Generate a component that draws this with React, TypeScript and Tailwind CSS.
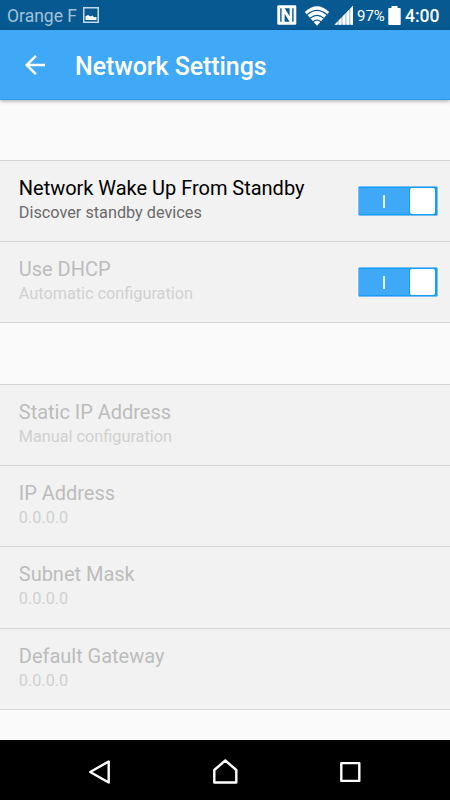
import React from "react";

function Toggle() {
  return (
    <span role="switch" aria-checked="true" className="flex h-[30px] w-20 shrink-0 items-center rounded-[2px] border border-[#7bbcf3] bg-[#3fa8f7]">
      <span className="flex h-full flex-1 items-center justify-center border-y border-[#0fa1f7]">
        <span className="h-[13px] w-[2px] bg-[#e3f3ff]" />
      </span>
      <span className="h-full w-[28px] rounded-[1px] border border-[#0fa1f7] bg-[#0fa1f7] pr-px">
        <span className="block h-full w-full rounded-[2px] bg-white" />
      </span>
    </span>
  );
}

type RowProps = { title: string; sub: string; enabled?: boolean; toggle?: boolean; height: string };

function Row({ title, sub, enabled, toggle, height }: RowProps) {
  return (
    <div className={`flex shrink-0 justify-between border-b border-[#d6d6d6] bg-[#f2f2f2] pr-3 pl-[18.8px] ${height}`}>
      <div className="flex flex-col pt-[15px] whitespace-nowrap">
        <span className={`text-[20px] leading-6 tracking-[-0.02px] ${enabled ? "text-black" : "text-[#bcbcbc]"}`}>{title}</span>
        <span className={`text-[16.25px] leading-[26px] ${enabled ? "text-[#6a6a6a]" : "text-[#d0d0d0]"}`}>{sub}</span>
      </div>
      {toggle && <div className="pt-[25px]"><Toggle /></div>}
    </div>
  );
}

export default function App() {
  return (
    <div className="flex h-[800px] w-[450px] flex-col overflow-hidden bg-[#fafafa] font-['Roboto',sans-serif]">
      <div className="flex h-[30px] shrink-0 items-center bg-[#075992] pr-[10px] pl-[7px] text-white">
        <span className="pt-[2px] text-[17.5px] leading-[28px] text-[#a3c1d7]">Orange F</span>
        <svg className="ml-[6px]" width="16" height="16" viewBox="0 0 16 16">
          <path d="M.75.75h14.5v14.5H.75z" fill="none" stroke="#c5d9e7" strokeWidth="1.5" />
          <path d="M2.5 13V9.3L5 8l2.5 1.5 2-1 1.5 1.8 2.5-.3v3z" fill="#fff" />
        </svg>
        <div className="ml-auto flex items-center">
          <svg width="20" height="20" viewBox="0 0 20 20">
            <rect x=".3" y=".3" width="19" height="19.4" rx="1.2" fill="#fff" />
            <path d="M3.2 3.2H4.6V16.8H3.2zM15.2 3.2h1.4v13.6h-1.4zM7.6 8.8l5 8H7.6zM7.6 3.2h5v8z" fill="#075992" />
          </svg>
          <svg className="ml-[7px]" width="26" height="21" viewBox="0 0 26 21">
            <path d="M.8 7Q13-4.5 25.2 7L13 20.8z" fill="#fff" />
            <path d="M3 9.8Q13 1 23 9.8M6 13.4Q13 7.4 20 13.4M9 16.7Q13 13.6 17 16.7" fill="none" stroke="#075992" strokeWidth="1.2" />
          </svg>
          <svg className="ml-[4px]" width="20" height="20" viewBox="0 0 20 20" fill="#fff">
            <path d="M.5 19.7 19 .8v18.9z" fill="#8db3ce" />
            <path d="M.5 19.7 3.6 16.5v3.2zM4.6 15.5l2.9-2.9v7.1H4.6zM8.5 11.5l2.9-2.9v11.1H8.5zM12.4 7.5l2.9-2.9v15.1h-2.9zM16.3 3.5 19 .8v18.9h-2.7z" />
          </svg>
          <span className="ml-[3px] w-[29px] pt-[2px] text-[15px] leading-[28px] whitespace-nowrap">97%</span>
          <svg className="ml-[2px]" width="13" height="19" viewBox="0 0 13 19" fill="#fff">
            <path d="M3.5 0h6v2H12q.7 0 .7.7v15.6q0 .7-.7.7H1q-.7 0-.7-.7V2.7Q.3 2 1 2h2.5z" />
          </svg>
          <span className="ml-[4px] w-[35px] pt-[2px] text-[17.5px] leading-[28px] font-medium whitespace-nowrap">4:00</span>
        </div>
      </div>

      <header className="z-10 flex h-[70px] shrink-0 items-center border-b border-[#299bee] bg-[#3fa8f7] pl-[25px] text-white shadow-[0_1px_4px_rgba(0,0,0,0.35)]">
        <svg width="20" height="20" viewBox="4 4 16 16" fill="#fff">
          <path d="M20 11H7.83l5.59-5.59L12 4l-8 8 8 8 1.41-1.41L7.83 13H20v-2z" />
        </svg>
        <h1 className="ml-[30px] pt-[5px] text-[25px] leading-[30px] font-medium tracking-[-0.08px] whitespace-nowrap">Network Settings</h1>
      </header>

      <main className="flex flex-1 flex-col">
        <section className="mt-[60px] border-t border-[#d6d6d6]">
          <Row title="Network Wake Up From Standby" sub="Discover standby devices" enabled toggle height="h-[81px]" />
          <Row title="Use DHCP" sub="Automatic configuration" toggle height="h-[81px]" />
        </section>
        <section className="mt-[61px] border-t border-[#d6d6d6]">
          <Row title="Static IP Address" sub="Manual configuration" height="h-[81px]" />
          <Row title="IP Address" sub="0.0.0.0" height="h-[81px]" />
          <Row title="Subnet Mask" sub="0.0.0.0" height="h-[82px]" />
          <Row title="Default Gateway" sub="0.0.0.0" height="h-[81px]" />
        </section>
      </main>

      <nav className="flex h-[60px] shrink-0 items-center justify-between bg-black px-[85px] pt-1">
        <svg width="30" height="30" viewBox="0 0 30 30" fill="none" stroke="#fff" strokeWidth="2.4" strokeLinejoin="round">
          <path d="M5.2 15 23.7 4.5v21z" />
        </svg>
        <svg width="30" height="30" viewBox="0 0 30 30" fill="none" stroke="#fff" strokeWidth="2.4" strokeLinejoin="round">
          <path d="M4.3 25.5V13L15.3 3.5l11 9.5v12.5z" />
        </svg>
        <svg width="30" height="30" viewBox="0 0 30 30" fill="none" stroke="#fff" strokeWidth="2.4" strokeLinejoin="round">
          <path d="M6.3 6.1h18v17.8h-18z" />
        </svg>
      </nav>
    </div>
  );
}
